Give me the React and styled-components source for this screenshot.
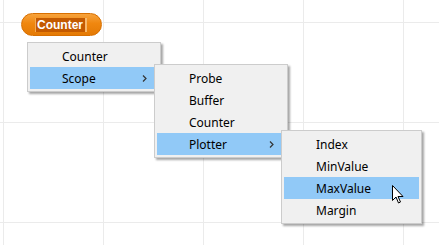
import styled, { createGlobalStyle } from "styled-components";

const GlobalStyle = createGlobalStyle`
  html, body {
    margin: 0;
    padding: 0;
    width: 439px;
    height: 245px;
    overflow: hidden;
  }
`;

// Workspace canvas with the grid
const Workspace = styled.div`
  position: relative;
  width: 439px;
  height: 245px;
  background-color: #ffffff;
  background-image:
    linear-gradient(to right, #ebebeb 1px, transparent 1px),
    linear-gradient(to bottom, #ebebeb 1px, transparent 1px);
  background-size: 100px 100px;
  background-position: 3px 22px;
  font-family: "Noto Sans", "Segoe UI", sans-serif;
`;

const Block = styled.div`
  position: absolute;
  left: 21px;
  top: 13px;
  width: 81px;
  height: 23px;
  box-sizing: border-box;
  border-radius: 12px;
  background: linear-gradient(to bottom, #f7a33c 0%, #f0870f 45%, #e47a05 100%);
  border: 1px solid #d86f00;
  display: flex;
  align-items: center;
  padding-left: 13px;
`;

const Field = styled.div`
  height: 14px;
  width: 52px;
  box-sizing: border-box;
  background: #c45a00;
  border-left: 1px solid #f5a850;
  border-right: 2px solid #f7b86a;
  display: flex;
  align-items: center;
  padding-left: 1px;
  color: #ffffff;
  font-family: "Liberation Sans", Arial, sans-serif;
  font-weight: bold;
  font-size: 12px;
`;

const Menu = styled.div`
  position: absolute;
  left: ${(p) => p.$left}px;
  top: ${(p) => p.$top}px;
  width: ${(p) => p.$width}px;
  box-sizing: border-box;
  background: #f0f0f0;
  border: 1px solid #cccccc;
  padding: 2px;
  display: flex;
  flex-direction: column;
  box-shadow: 2px 2px 2px rgba(0, 0, 0, 0.35);
`;

const Item = styled.div`
  position: relative;
  height: 22px;
  display: flex;
  align-items: center;
  padding-left: 32px;
  font-size: 12px;
  color: #000000;
  background: ${(p) => (p.$active ? "#91c9f7" : "transparent")};
`;

const Chevron = styled.svg`
  position: absolute;
  right: 11px;
  top: 8px;
`;

const Cursor = styled.svg`
  position: absolute;
  left: 392px;
  top: 185px;
`;

function Arrow() {
  return (
    <Chevron width="5" height="7" viewBox="0 0 5 7">
      <path d="M1 0.5 L4 3.5 L1 6.5" fill="none" stroke="#333" strokeWidth="1.2" />
    </Chevron>
  );
}

function MenuItem({ label, active, sub }) {
  return (
    <Item $active={active}>
      {label}
      {sub && <Arrow />}
    </Item>
  );
}

export default function App() {
  return (
    <>
      <GlobalStyle />
      <Workspace>
        <Block>
          <Field>Counter</Field>
        </Block>

        <Menu $left={27} $top={42} $width={134}>
          <MenuItem label="Counter" />
          <MenuItem label="Scope" active sub />
        </Menu>

        <Menu $left={154} $top={64} $width={134}>
          <MenuItem label="Probe" />
          <MenuItem label="Buffer" />
          <MenuItem label="Counter" />
          <MenuItem label="Plotter" active sub />
        </Menu>

        <Menu $left={281} $top={130} $width={141}>
          <MenuItem label="Index" />
          <MenuItem label="MinValue" />
          <MenuItem label="MaxValue" active />
          <MenuItem label="Margin" />
        </Menu>

        <Cursor width="12" height="19" viewBox="0 0 12 19">
          <path
            d="M0.5 0.5 L0.5 15.5 L4 12 L6.5 18 L8.5 17 L6 11.5 L11 11.5 Z"
            fill="#ffffff"
            stroke="#000000"
            strokeWidth="1"
            strokeLinejoin="miter"
          />
        </Cursor>
      </Workspace>
    </>
  );
}
